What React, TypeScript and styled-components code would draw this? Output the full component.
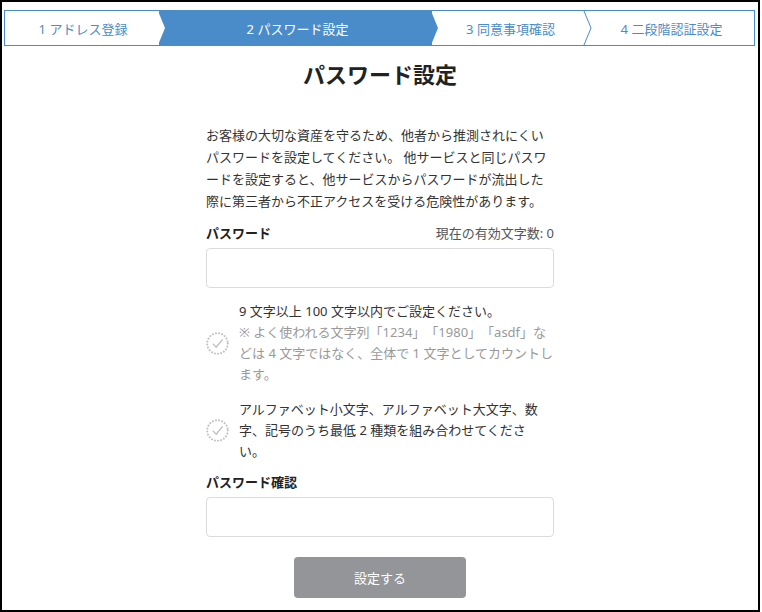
import React from "react";
import styled, { createGlobalStyle } from "styled-components";

const BLUE = "#4a8cc9";

const Global = createGlobalStyle`
  html, body { margin: 0; padding: 0; background: #fff; }
  body {
    font-family: "Noto Sans", "Noto Sans CJK JP", sans-serif;
    color: #333;
    text-spacing-trim: space-all;
  }
  * { box-sizing: border-box; }
`;

const Frame = styled.div`
  width: 760px;
  height: 612px;
  border: 2px solid #000;
  padding: 8px 2px 0;
  display: flex;
  flex-direction: column;
  align-items: center;
`;

const Stepper = styled.ol`
  align-self: flex-start;
  display: flex;
  margin: 0;
  padding: 0;
  list-style: none;
  height: 36px;
`;

const Step = styled.li<{ $w: number; $active?: boolean; $first?: boolean; $last?: boolean }>`
  position: relative;
  width: ${(p) => p.$w}px;
  height: 36px;
  border-top: 1px solid ${BLUE};
  border-bottom: 1px solid ${BLUE};
  border-left: ${(p) => (p.$first ? `1px solid ${BLUE}` : "none")};
  border-right: ${(p) => (p.$last ? `1px solid ${BLUE}` : "none")};
  background: ${(p) => (p.$active ? BLUE : "#fff")};
  color: ${(p) => (p.$active ? "#fff" : BLUE)};
  font-size: 13px;
  display: flex;
  align-items: center;
  justify-content: center;
  padding-left: ${(p) => (p.$first ? 2 : 4)}px;
`;

const Arrow = styled.svg`
  position: absolute;
  top: 0;
  right: -6px;
  width: 7px;
  height: 100%;
  overflow: visible;
  z-index: 2;
`;

const Title = styled.h1`
  margin: 12px 0 0;
  font-size: 22px;
  font-weight: 700;
  line-height: 33px;
  color: #222;
`;

const Column = styled.div`
  width: 348px;
  margin-top: 33px;
  display: flex;
  flex-direction: column;
`;

const Lead = styled.p`
  margin: 0;
  font-size: 13px;
  line-height: 22px;
  color: #333;
`;

const FieldHeader = styled.div<{ $gap: number }>`
  display: flex;
  justify-content: space-between;
  align-items: baseline;
  margin-top: ${(p) => p.$gap}px;
  line-height: 20px;
`;

const Label = styled.label`
  font-size: 13px;
  font-weight: 700;
  color: #222;
`;

const Counter = styled.span`
  font-size: 13px;
  color: #555;
`;

const Input = styled.input`
  display: block;
  width: 100%;
  height: 40px;
  margin-top: 5px;
  border: 1px solid #dcdcdc;
  border-radius: 4px;
  padding: 0 10px;
  font-size: 14px;
  font-family: inherit;
  outline: none;
`;

const Rules = styled.ul`
  margin: 13px 0 0;
  padding: 0;
  list-style: none;
`;

const Rule = styled.li`
  display: flex;
  align-items: center;
  gap: 10px;
  & + & {
    margin-top: 14px;
  }
`;

const RuleText = styled.div<{ $inset?: number }>`
  flex: 1;
  padding-right: ${(p) => p.$inset ?? 0}px;
  font-size: 13px;
  line-height: 21px;
  color: #333;
`;

const Note = styled.div`
  color: #999;
`;

const Submit = styled.button`
  align-self: center;
  width: 172px;
  height: 41px;
  margin-top: 20px;
  background: #939599;
  color: #fff;
  border: none;
  border-radius: 4px;
  font-size: 13px;
  font-family: inherit;
`;

const CheckIcon = () => (
  <svg width="23" height="23" viewBox="0 0 23 23" style={{ flex: "none" }}>
    <circle
      cx="11.5"
      cy="11.5"
      r="10.3"
      fill="none"
      stroke="#c2c2c2"
      strokeWidth="2.1"
      strokeDasharray="0.01 3.1"
      strokeLinecap="round"
    />
    <polyline points="6.8,11.6 10.2,15.2 16.6,7.4" fill="none" stroke="#bdbdbd" strokeWidth="1.3" />
  </svg>
);

const steps = [
  { label: "1 アドレス登録", w: 155 },
  { label: "2 パスワード設定", w: 273, active: true },
  { label: "3 同意事項確認", w: 153 },
  { label: "4 二段階認証設定", w: 170 },
];

export default function App() {
  return (
    <>
      <Global />
      <Frame>
        <Stepper>
          {steps.map((s, i) => {
            const last = i === steps.length - 1;
            const nextActive = !last && steps[i + 1].active;
            return (
              <Step key={s.label} $w={s.w} $active={s.active} $first={i === 0} $last={last}>
                {s.label}
                {!last && (
                  <Arrow viewBox="0 0 7 34" preserveAspectRatio="none">
                    {s.active || nextActive ? (
                      <polygon points="0,0 7,17 0,34" fill={s.active ? BLUE : "#fff"} />
                    ) : (
                      <polyline points="0,0 7,17 0,34" fill="none" stroke={BLUE} strokeWidth="1" />
                    )}
                  </Arrow>
                )}
              </Step>
            );
          })}
        </Stepper>
        <Title>パスワード設定</Title>
        <Column>
          <Lead>
            お客様の大切な資産を守るため、他者から推測されにくいパスワードを設定してください。
            他サービスと同じパスワードを設定すると、他サービスからパスワードが流出した際に第三者から不正アクセスを受ける危険性があります。
          </Lead>
          <FieldHeader $gap={11}>
            <Label htmlFor="pw">パスワード</Label>
            <Counter>現在の有効文字数: 0</Counter>
          </FieldHeader>
          <Input id="pw" type="password" />
          <Rules>
            <Rule>
              <CheckIcon />
              <RuleText>
                9 文字以上 100 文字以内でご設定ください。
                <Note>
                  ※ よく使われる文字列「1234」「1980」「asdf」などは 4 文字ではなく、全体で 1 文字としてカウントします。
                </Note>
              </RuleText>
            </Rule>
            <Rule>
              <CheckIcon />
              <RuleText $inset={3}>
                アルファベット小文字、アルファベット大文字、数字、記号のうち最低 2 種類を組み合わせてください。
              </RuleText>
            </Rule>
          </Rules>
          <FieldHeader $gap={10}>
            <Label htmlFor="pw2">パスワード確認</Label>
          </FieldHeader>
          <Input id="pw2" type="password" />
          <Submit type="button">設定する</Submit>
        </Column>
      </Frame>
    </>
  );
}
